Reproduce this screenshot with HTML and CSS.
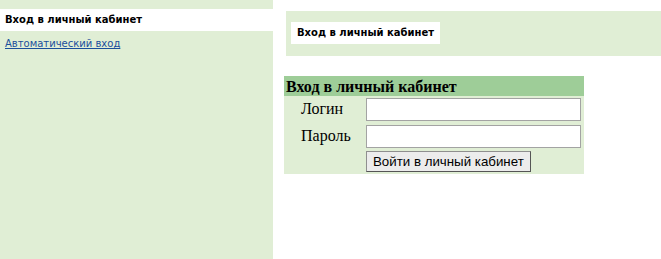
FILE: index.html
```html
<!DOCTYPE html>
<html lang="ru">
<head>
    <meta charset="UTF-8">
    <title>Личный кабинет</title>
    <link rel="stylesheet" href="styles.css">
</head>
<body>

<div class="page">
    <!-- Левое меню -->
    <div class="sidebar">
        <div class="menu-item">Вход в личный кабинет</div>
        <a href="#" class="menu-link">Автоматический вход</a>
    </div>

    <!-- Основная часть -->
    <div class="main">
        <div class="title-bar">
            <div class="title">Вход в личный кабинет</div>
        </div>

        <table class="login-table">
            <tr>
                <th colspan="2">Вход в личный кабинет</th>
            </tr>
            <tr>
                <td class="label">Логин</td>
                <td><input type="text" class="input-field"></td>
            </tr>
            <tr>
                <td class="label">Пароль</td>
                <td><input type="password" class="input-field"></td>
            </tr>
            <tr>
                <td></td>
                <td><button class="btn">Войти в личный кабинет</button></td>
            </tr>
        </table>
    </div>
</div>

</body>
</html>
```

FILE: styles.css
```css
html, body {
    margin: 0;
    height: 100%;
    background-color: white;
    font-family: "Liberation Serif", serif;
}
.page {
    display: flex;
    height: 100%;
}
.sidebar {
    width: 273px;
    flex: none;
    background-color: #e0eed5;
    padding-top: 9px;
    box-sizing: border-box;
}
.menu-item {
    background-color: white;
    height: 22px;
    line-height: 22px;
    padding-left: 5px;
    font-family: "DejaVu Sans", Verdana, sans-serif;
    font-size: 10px;
    font-weight: bold;
    color: black;
}
.menu-link {
    display: block;
    margin-top: 7px;
    padding-left: 5px;
    font-family: "DejaVu Sans", Verdana, sans-serif;
    font-size: 10px;
    color: #1a4f9c;
}
.main {
    flex: 1;
    padding-top: 11px;
    padding-left: 11px;
}
.title-bar {
    margin-left: 2px;
    height: 45px;
    background-color: #e0eed5;
    padding: 11px 0 0 5px;
    box-sizing: border-box;
}
.title {
    display: inline-block;
    background-color: white;
    height: 22px;
    line-height: 22px;
    padding: 0 6px;
    font-family: "DejaVu Sans", Verdana, sans-serif;
    font-size: 10px;
    font-weight: bold;
    color: black;
}
.login-table {
    margin-top: 20px;
    width: 300px;
    height: 98px;
    border-spacing: 0;
    background-color: #e0eed5;
    font-size: 16px;
}
.login-table th {
    background-color: #9ecd98;
    text-align: left;
    padding: 1px 2px 0;
    height: 19px;
    font-weight: bold;
}
.login-table td {
    padding: 1px 2px;
}
.label {
    width: 61px;
    padding-left: 17px !important;
}
.input-field {
    box-sizing: border-box;
    width: 215px;
    height: 23px;
    border: 1px solid #a3a3a3;
    margin: 0;
}
.btn {
    font-family: "Liberation Sans", Arial, sans-serif;
    font-size: 13.3px;
    height: 21px;
    padding: 0 6px;
    background-color: #ececec;
    border: 1px solid #8f8f8f;
    border-right-color: #555;
    border-bottom-color: #555;
}
```
